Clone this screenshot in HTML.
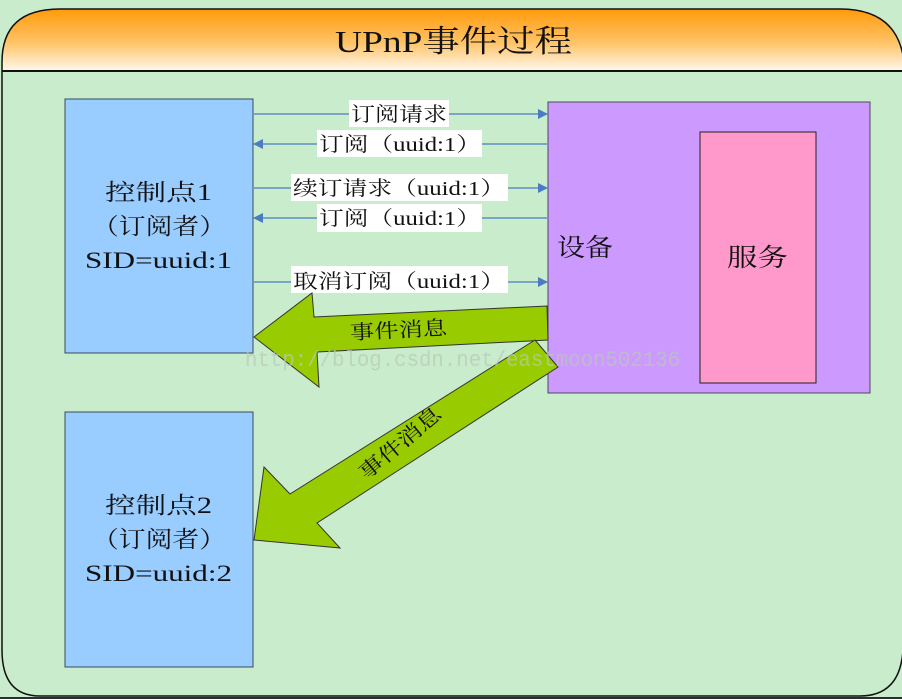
<!DOCTYPE html>
<html><head><meta charset="utf-8"><style>
html,body{margin:0;padding:0;background:#c8eccc;width:902px;height:699px;overflow:hidden}
svg{display:block}
text{font-family:"Liberation Serif","Noto Serif CJK SC","Noto Sans CJK SC",serif;fill:#111}
</style></head><body>
<svg width="902" height="699" viewBox="0 0 902 699">
<defs>
<linearGradient id="hg" x1="0" y1="0" x2="0" y2="1">
<stop offset="0" stop-color="#ff9a0a"/><stop offset="0.55" stop-color="#ffc468"/><stop offset="1" stop-color="#fff8ee"/>
</linearGradient>
<marker id="ah" markerWidth="10" markerHeight="10" refX="9" refY="5" orient="auto" markerUnits="userSpaceOnUse">
<path d="M0,0 L10,5 L0,10 Z" fill="#4a7cc4"/></marker>
</defs>
<rect x="0" y="0" width="902" height="699" fill="#c8eccc"/>
<path d="M2,71 L2,62 Q2,9 60,9 L840,9 Q902,9 902,62 L902,71 Z" fill="url(#hg)"/>
<path d="M2,71 L2,62 Q2,9 60,9 L840,9 Q898,9 904,62" fill="none" stroke="#111" stroke-width="1.5"/>
<line x1="2" y1="71" x2="902" y2="71" stroke="#111" stroke-width="2"/>
<path d="M2,71 L2,650 Q2,696 40,696 L860,696 Q900,696 903,650" fill="none" stroke="#111" stroke-width="1.5"/>
<rect x="0" y="697" width="902" height="2" fill="#2b2f33"/>
<text x="335" y="52" font-size="31" textLength="237" lengthAdjust="spacingAndGlyphs">UPnP事件过程</text>

<rect x="65" y="99" width="188" height="254" fill="#99ccff" stroke="#3a4a5a" stroke-width="1"/>
<text x="105" y="200" font-size="23" textLength="107" lengthAdjust="spacingAndGlyphs">控制点1</text>
<text x="92" y="234" font-size="23" textLength="134" lengthAdjust="spacingAndGlyphs">（订阅者）</text>
<text x="85" y="268" font-size="23" textLength="147" lengthAdjust="spacingAndGlyphs">SID=uuid:1</text>

<rect x="65" y="412" width="188" height="255" fill="#99ccff" stroke="#3a4a5a" stroke-width="1"/>
<text x="105" y="513" font-size="23" textLength="107" lengthAdjust="spacingAndGlyphs">控制点2</text>
<text x="92" y="547" font-size="23" textLength="134" lengthAdjust="spacingAndGlyphs">（订阅者）</text>
<text x="85" y="581" font-size="23" textLength="147" lengthAdjust="spacingAndGlyphs">SID=uuid:2</text>

<rect x="548" y="102" width="322" height="291" fill="#cc99ff" stroke="#4a4a5a" stroke-width="1"/>
<text x="557" y="256" font-size="25" textLength="56" lengthAdjust="spacingAndGlyphs">设备</text>
<rect x="700" y="132" width="116" height="251" fill="#ff99cc" stroke="#222" stroke-width="1"/>
<text x="727" y="266" font-size="25" textLength="61" lengthAdjust="spacingAndGlyphs">服务</text>

<g stroke="#4a7cc4" stroke-width="1.3" fill="none">
<line x1="254" y1="114" x2="547" y2="114" marker-end="url(#ah)"/>
<line x1="547" y1="144" x2="254" y2="144" marker-end="url(#ah)"/>
<line x1="254" y1="188" x2="547" y2="188" marker-end="url(#ah)"/>
<line x1="547" y1="218" x2="254" y2="218" marker-end="url(#ah)"/>
<line x1="254" y1="282" x2="547" y2="282" marker-end="url(#ah)"/>
</g>
<g fill="#fff">
<rect x="349" y="100" width="100" height="27"/>
<rect x="317" y="130" width="165" height="27"/>
<rect x="291" y="174" width="217" height="27"/>
<rect x="317" y="204" width="165" height="28"/>
<rect x="291" y="266" width="217" height="27"/>
</g>
<g font-size="20">
<text x="351" y="121" textLength="96" lengthAdjust="spacingAndGlyphs">订阅请求</text>
<text x="319" y="151" textLength="162" lengthAdjust="spacingAndGlyphs">订阅（uuid:1）</text>
<text x="293" y="195" textLength="212" lengthAdjust="spacingAndGlyphs">续订请求（uuid:1）</text>
<text x="319" y="225" textLength="162" lengthAdjust="spacingAndGlyphs">订阅（uuid:1）</text>
<text x="293" y="288" textLength="212" lengthAdjust="spacingAndGlyphs">取消订阅（uuid:1）</text>
</g>

<path d="M254,337 L312,293 L314,317 L547,306 L548,340 L317,352 L319,387 Z" fill="#99cc00" stroke="#333" stroke-width="1"/>
<text x="350" y="337" font-size="20" textLength="97" lengthAdjust="spacingAndGlyphs" transform="rotate(-3 398 330)">事件消息</text>
<path d="M535,340 L558,367 L317,523 L340,548 L254,540 L264,467 L290,494 Z" fill="#99cc00" stroke="#333" stroke-width="1"/>
<text x="350" y="450" font-size="20" textLength="100" lengthAdjust="spacingAndGlyphs" transform="rotate(-40 400 443)">事件消息</text>

<text x="245" y="366" font-size="22" textLength="435" lengthAdjust="spacingAndGlyphs" style="fill:#b9c9b9;opacity:0.7;font-family:'Liberation Mono',monospace">http://blog.csdn.net/eastmoon502136</text>
</svg>
</body></html>
